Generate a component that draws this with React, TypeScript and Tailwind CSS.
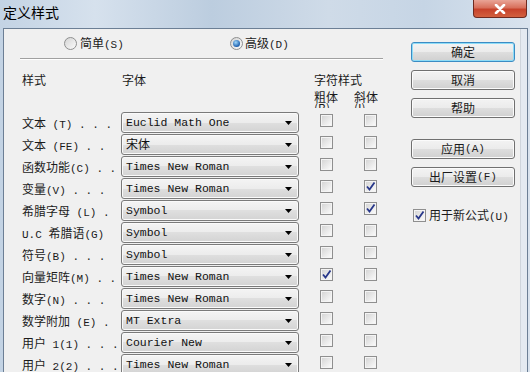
import React from 'react';

const cjk = /([\u3400-\u9fff\uff00-\uffef]+)/;

// Latin in a monospace face (half width), Chinese a little larger, like SimSun
function Mixed({ text }: { text: string }) {
  return (
    <>
      {text.split(cjk).map((part, i) =>
        cjk.test(part) ? (
          <span key={i} className="text-[12px] font-['Noto_Sans_CJK_SC',sans-serif]">
            {part}
          </span>
        ) : (
          <span key={i}>{part}</span>
        )
      )}
    </>
  );
}

const rows: [string, string, boolean, boolean][] = [
  ['文本 (T) . . .', 'Euclid Math One', false, false],
  ['文本 (FE) . .', '宋体', false, false],
  ['函数功能(C) . .', 'Times New Roman', false, false],
  ['变量(V) . . .', 'Times New Roman', false, true],
  ['希腊字母 (L) .', 'Symbol', false, true],
  ['U.C 希腊语(G)', 'Symbol', false, false],
  ['符号(B) . . .', 'Symbol', false, false],
  ['向量矩阵(M) . .', 'Times New Roman', true, false],
  ['数字(N) . . .', 'Times New Roman', false, false],
  ['数学附加 (E) .', 'MT Extra', false, false],
  ['用户 1(1) . . .', 'Courier New', false, false],
  ['用户 2(2) . . .', 'Times New Roman', false, false],
];

const Check = ({ checked }: { checked: boolean }) => (
  <div className="w-[13px] h-[13px] border border-[#8f8f8f] bg-[#f4f4f4] p-px">
    <div className="w-full h-full bg-[linear-gradient(135deg,#d6d6d6,#f9f9f9)] relative">
      {checked && (
        <svg viewBox="0 0 11 11" className="absolute -left-px -top-px w-[11px] h-[11px]">
          <path d="M2 5.5 L4.5 8.5 L9.5 1.5" fill="none" stroke="#27378a" strokeWidth="1.8" />
        </svg>
      )}
    </div>
  </div>
);

const Radio = ({ on }: { on: boolean }) => (
  <div className="w-[13px] h-[13px] rounded-full border border-[#8e8f8f] bg-[linear-gradient(135deg,#d4d4d4,#fbfbfb)] flex items-center justify-center">
    {on && (
      <div className="w-[7px] h-[7px] rounded-full bg-[radial-gradient(circle_at_40%_35%,#9fd7fb,#1c5fae_70%)]" />
    )}
  </div>
);

const Button = ({ label, primary }: { label: string; primary?: boolean }) => (
  <div
    className={`h-[20px] w-[104px] rounded-[3px] border flex items-center justify-center text-[11px] text-[#1b1b1b] bg-[linear-gradient(#f3f3f3_0%,#ebebeb_50%,#dedede_50%,#d0d0d0_100%)] ${
      primary
        ? 'border-[#3b8cc4] shadow-[inset_0_0_0_1px_#8ddcf7]'
        : 'border-[#707070] shadow-[inset_0_0_0_1px_#fbfbfb]'
    }`}
  >
    <Mixed text={label} />
  </div>
);

const Select = ({ value }: { value: string }) => (
  <div className="w-[178px] h-[21px] rounded-[3px] border border-[#7a7a7a] bg-[linear-gradient(#f4f4f4_0%,#ececec_50%,#dfdfdf_50%,#d3d3d3_100%)] shadow-[inset_0_0_0_1px_#fafafa] flex items-center pl-[4px] pr-[6px]">
    <span className="flex-1 text-[11.5px] text-[#111] leading-none whitespace-pre">
      <Mixed text={value} />
    </span>
    <svg width="7" height="4" viewBox="0 0 7 4">
      <path d="M0 0 H7 L3.5 4 Z" fill="#000" />
    </svg>
  </div>
);

export default function App() {
  return (
    <div className="w-[530px] h-[372px] overflow-hidden flex flex-col bg-[linear-gradient(90deg,#c3d3e4_0%,#d6e1ed_18%,#bccddf_40%,#cfdbe8_62%,#c6d5e5_80%,#d9e3ee_100%)] font-['Liberation_Mono','Noto_Sans_CJK_SC',monospace] text-[11px] text-[#1b1b1b]">
      {/* title bar */}
      <div className="h-[28px] flex items-start relative shrink-0">
        <div className="pl-[3px] pt-[2px] text-[14px] text-black font-['Noto_Sans_CJK_SC',sans-serif]">定义样式</div>
        <div className="absolute right-[3px] top-0 w-[54px] h-[18px] rounded-b-[4px] border border-t-0 border-[#6e2a20] bg-[linear-gradient(#e9a496_0%,#d8705c_45%,#c7422b_55%,#d2603f_100%)] flex items-center justify-center">
          <svg width="12" height="10" viewBox="0 0 12 10">
            <path d="M2 1 L10 9 M10 1 L2 9" stroke="#fff" strokeWidth="2.6" strokeLinecap="round" />
          </svg>
        </div>
      </div>

      {/* client area */}
      <div className="flex-1 ml-[3px] w-[525px] border border-[#6c7f95] bg-[#e4eaf1] flex">
        <div className="w-[517px] bg-[#f0f0f0] border-r border-[#cfd5dc] flex">
          {/* left column */}
          <div className="w-[407px]">
            <div className="h-[29px] flex items-center">
              <div className="ml-[60px] w-[166px] flex items-center gap-[3px]">
                <Radio on={false} />
                <span><Mixed text="简单(S)" /></span>
              </div>
              <div className="flex items-center gap-[2px]">
                <Radio on />
                <span><Mixed text="高级(D)" /></span>
              </div>
            </div>
            <div className="ml-[16px] w-[363px] h-px bg-[#a0a0a0]" />
            <div className="ml-[16px] w-[363px] h-px bg-white" />

            {/* headers */}
            <div className="h-[52px] pl-[18px] flex text-[12px] font-['Noto_Sans_CJK_SC',sans-serif] leading-[12px]">
              <div className="w-[100px] pt-[14px]">样式</div>
              <div className="w-[192px] pt-[14px]">字体</div>
              <div className="pt-[14px]">
                <div>字符样式</div>
                <div className="flex mt-[5px]">
                  <div className="w-[24px] h-[17px] overflow-hidden leading-[11px]">粗体<br />(B)</div>
                  <div className="ml-[16px] w-[24px] h-[17px] overflow-hidden leading-[11px]">斜体<br />(I)</div>
                </div>
              </div>
            </div>

            {/* style rows */}
            {rows.map(([label, font, bold, italic]) => (
              <div key={label} className="h-[22px] pl-[18px] flex items-start">
                <div className="w-[99px] leading-[21px] whitespace-pre">
                  <Mixed text={label} />
                </div>
                <Select value={font} />
                <div className="ml-[21px] mt-[2px]">
                  <Check checked={bold} />
                </div>
                <div className="ml-[31px] mt-[2px]">
                  <Check checked={italic} />
                </div>
              </div>
            ))}
          </div>

          {/* right column */}
          <div className="w-[104px] pt-[13px] flex flex-col">
            <Button label="确定" primary />
            <div className="mt-[8px]"><Button label="取消" /></div>
            <div className="mt-[8px]"><Button label="帮助" /></div>
            <div className="mt-[21px]"><Button label="应用(A)" /></div>
            <div className="mt-[8px]"><Button label="出厂设置(F)" /></div>
            <div className="mt-[19px] flex items-center gap-[3px] ml-[2px]">
              <Check checked />
              <span><Mixed text="用于新公式(U)" /></span>
            </div>
          </div>
        </div>
      </div>
    </div>
  );
}
